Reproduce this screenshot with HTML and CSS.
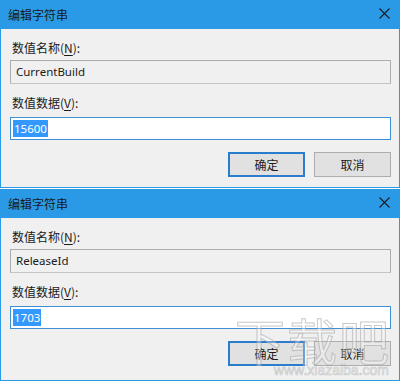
FILE: index.html
```html
<!DOCTYPE html>
<html lang="zh-CN">
<head>
  <meta charset="UTF-8">
  <title>编辑字符串</title>
  <link rel="stylesheet" href="styles.css">
</head>
<body>

  <div class="dialog first">
    <div class="titlebar">
      <span class="title">编辑字符串</span>
      <svg class="close" width="11" height="11" viewBox="0 0 11 11">
        <path d="M0.5 0.5 L10.5 10.5 M10.5 0.5 L0.5 10.5" stroke="#1b1b1b" stroke-width="1.1" fill="none"/>
      </svg>
    </div>
    <div class="content">
      <label class="lbl">数值名称(<u>N</u>):</label>
      <div class="field readonly">CurrentBuild</div>
      <label class="lbl lbl2">数值数据(<u>V</u>):</label>
      <div class="field active"><span class="sel">15600</span></div>
      <div class="buttons">
        <button class="btn default">确定</button>
        <button class="btn">取消</button>
      </div>
    </div>
  </div>

  <div class="dialog second">
    <div class="titlebar">
      <span class="title">编辑字符串</span>
      <svg class="close" width="11" height="11" viewBox="0 0 11 11">
        <path d="M0.5 0.5 L10.5 10.5 M10.5 0.5 L0.5 10.5" stroke="#1b1b1b" stroke-width="1.1" fill="none"/>
      </svg>
    </div>
    <div class="content">
      <label class="lbl">数值名称(<u>N</u>):</label>
      <div class="field readonly">ReleaseId</div>
      <label class="lbl lbl2">数值数据(<u>V</u>):</label>
      <div class="field active"><span class="sel">1703</span></div>
      <div class="buttons">
        <button class="btn default">确定</button>
        <button class="btn">取消</button>
      </div>
    </div>
    <div class="watermark">
      <span class="wm-big">下载吧</span>
      <span class="wm-small">www.xiazaiba.com</span>
    </div>
  </div>

</body>
</html>
```

FILE: styles.css
```css
body {
  margin: 0;
  width: 400px;
  background-color: #fff;
  font-family: "Noto Sans", "Noto Sans CJK SC", sans-serif;
  font-size: 12px;
  color: #1a1a1a;
}
.dialog {
  position: relative;
  box-sizing: border-box;
  width: 400px;
  border: 1px solid #2b9ae6;
  border-top: none;
  background-color: #f0f0f0;
}
.first {
  height: 188px;
}
.second {
  height: 192px;
  margin-top: 1px;
}
.titlebar {
  height: 29px;
  background-color: #2b9ae6;
  display: flex;
  align-items: center;
  justify-content: space-between;
  padding: 0 9px 0 7px;
}
.title {
  font-family: "Noto Sans CJK SC", sans-serif;
  font-size: 12px;
  color: #1a1a1a;
}
.close {
  margin-top: -2px;
}
.content {
  padding: 11px 8px 0 9px;
  display: flex;
  flex-direction: column;
}
.lbl {
  font-family: "Noto Sans CJK SC", sans-serif;
  height: 16px;
  line-height: 16px;
  padding-left: 2px;
  color: #1a1a1a;
}
.lbl u {
  text-decoration-thickness: 1px;
  text-underline-offset: 2px;
}
.lbl2 {
  margin-top: 11px;
}
.field {
  box-sizing: border-box;
  height: 24px;
  margin-top: 4px;
  padding-left: 5px;
  line-height: 22px;
  font-size: 11.5px;
  color: #1a1a1a;
}
.readonly {
  background-color: #f0f0f0;
  border: 1px solid #adadad;
  border-bottom-color: #c4c4c4;
}
.active {
  height: 23px;
  margin-top: 6px;
  background-color: #fff;
  border: 1px solid #3f8fd6;
  padding-left: 2px;
}
.sel {
  background-color: #3399ff;
  color: #fff;
  padding: 1px 1px;
}
.buttons {
  display: flex;
  justify-content: flex-end;
  gap: 9px;
  margin-top: 12px;
}
.btn {
  box-sizing: border-box;
  width: 77px;
  height: 25px;
  font-family: "Noto Sans CJK SC", sans-serif;
  font-size: 12px;
  color: #1a1a1a;
  background-color: #e1e1e1;
  border: 1px solid #adadad;
  padding: 0;
}
.default {
  border: 2px solid #2a7ccc;
}
.watermark {
  position: absolute;
  right: 8px;
  bottom: 3px;
  display: flex;
  flex-direction: column;
  align-items: flex-end;
  pointer-events: none;
}
.wm-big {
  font-family: "Noto Sans CJK SC", sans-serif;
  font-size: 50px;
  line-height: 48px;
  letter-spacing: 2px;
  color: rgba(255, 255, 255, 0.3);
  -webkit-text-stroke: 1px rgba(165, 165, 165, 0.6);
}
.wm-small {
  margin-right: 2px;
  font-family: "Liberation Sans", sans-serif;
  font-size: 14px;
  line-height: 14px;
  color: rgba(255, 255, 255, 0.2);
  -webkit-text-stroke: 0.6px rgba(165, 165, 165, 0.6);
}
```
